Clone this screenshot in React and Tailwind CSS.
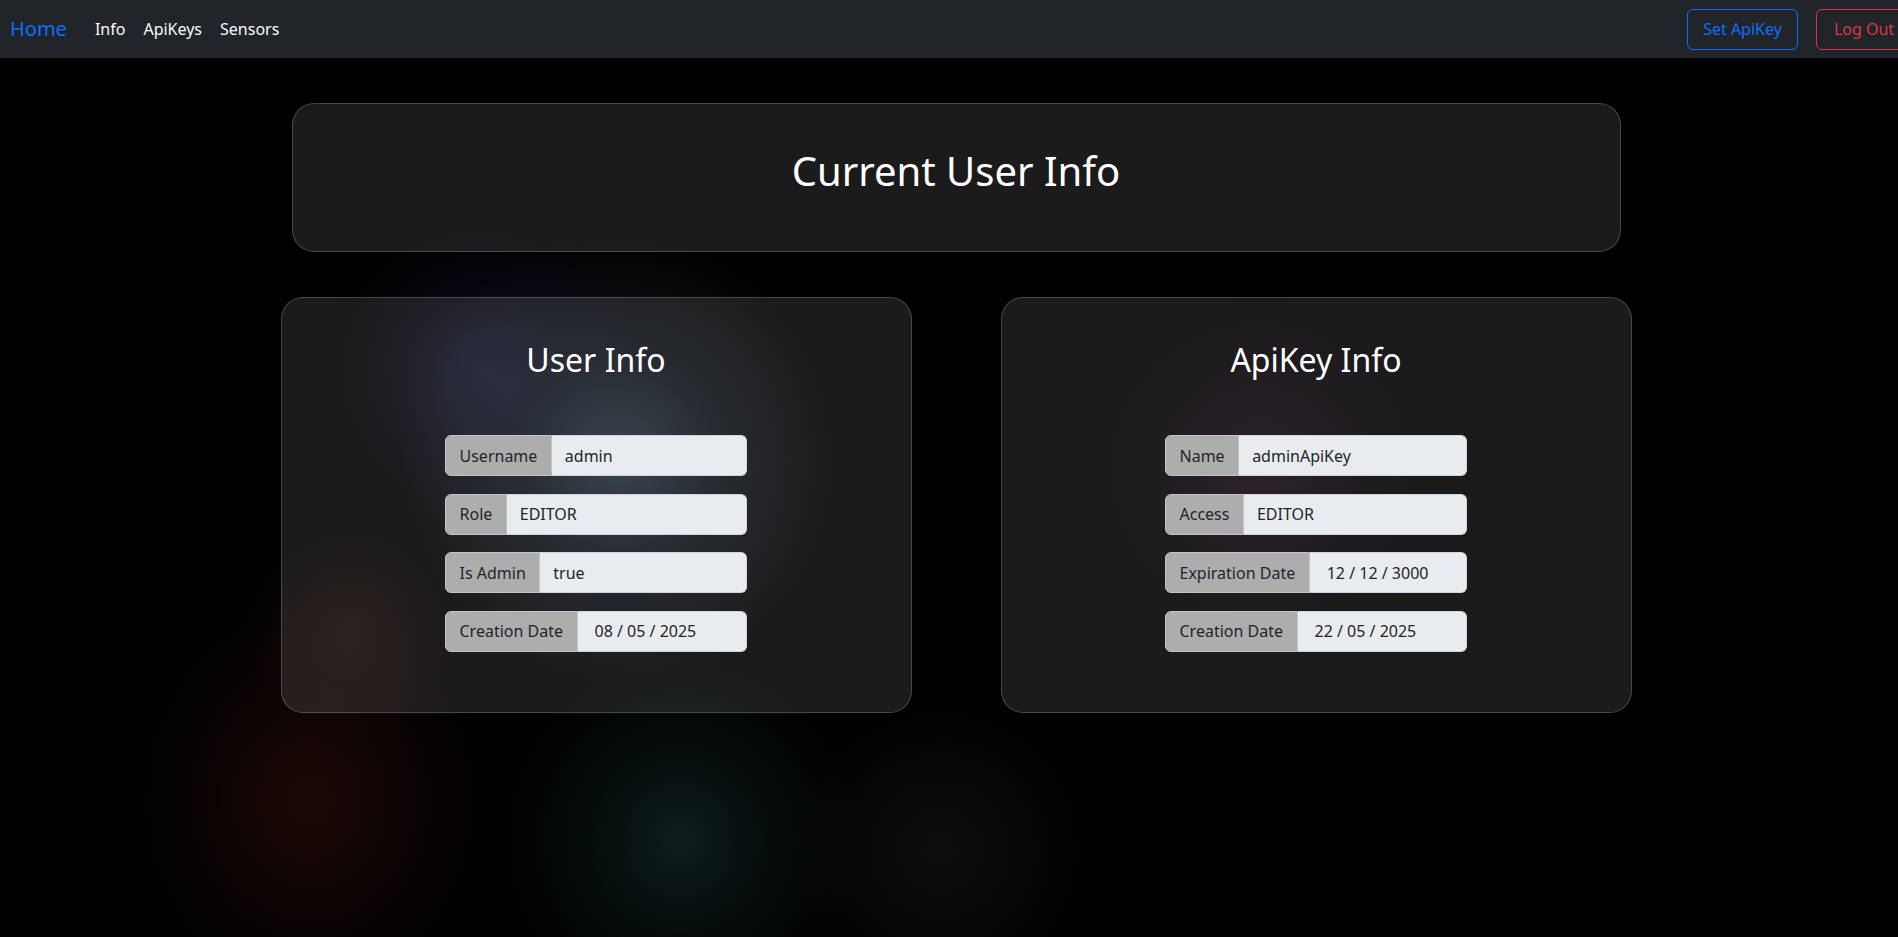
import React from 'react';

const userRows = [
  { label: 'Username', value: 'admin' },
  { label: 'Role', value: 'EDITOR' },
  { label: 'Is Admin', value: 'true' },
  { label: 'Creation Date', value: '08 / 05 / 2025', date: true },
];

const apiKeyRows = [
  { label: 'Name', value: 'adminApiKey' },
  { label: 'Access', value: 'EDITOR' },
  { label: 'Expiration Date', value: '12 / 12 / 3000', date: true },
  { label: 'Creation Date', value: '22 / 05 / 2025', date: true },
];

const InfoRow = ({ label, value, date }) => (
  <div className="flex h-[41px] w-[302px] text-[16px] text-[#212529]">
    <span className="flex items-center whitespace-nowrap rounded-l-[6px] border border-[#c2c5c8] bg-[#adadad] px-[13.5px]">
      {label}
    </span>
    <div
      className={`flex flex-1 items-center rounded-r-[6px] border border-l-0 border-[#ced4da] bg-[#e9ecef] ${
        date ? 'pl-[17px]' : 'pl-[13px]'
      }`}
    >
      {value}
    </div>
  </div>
);

const InfoCard = ({ title, rows }) => (
  <div className="flex w-[631px] flex-col items-center rounded-[22px] border border-white/20 bg-white/[0.105] pt-[43px] pb-[60px]">
    <h2 className="text-[32px] leading-[38px] text-white">{title}</h2>
    <div className="mt-[56px] flex flex-col gap-[17.5px]">
      {rows.map((row) => (
        <InfoRow key={row.label} {...row} />
      ))}
    </div>
  </div>
);

export default function App() {
  return (
    <div className="relative min-h-screen overflow-hidden bg-black font-['Noto_Sans',sans-serif]">
      {/* background glows */}
      <div className="pointer-events-none absolute inset-0">
        <div className="absolute left-[320px] top-[210px] h-[320px] w-[320px] rounded-full bg-[radial-gradient(closest-side,rgba(22,24,52,0.7)_0%,rgba(15,15,40,0.3)_55%,transparent_100%)]" />
        <div className="absolute left-[400px] top-[230px] h-[460px] w-[440px] rounded-full bg-[radial-gradient(closest-side,rgba(42,60,74,0.8)_0%,rgba(30,40,54,0.45)_45%,transparent_100%)]" />
        <div className="absolute left-[240px] top-[520px] h-[220px] w-[220px] rounded-full bg-[radial-gradient(closest-side,rgba(30,12,8,0.6)_0%,transparent_100%)]" />
        <div className="absolute left-[130px] top-[590px] h-[420px] w-[360px] rounded-full bg-[radial-gradient(closest-side,rgba(36,12,8,0.8)_0%,rgba(26,8,6,0.4)_55%,transparent_100%)]" />
        <div className="absolute left-[500px] top-[650px] h-[380px] w-[360px] rounded-full bg-[radial-gradient(closest-side,rgba(16,34,34,0.85)_0%,rgba(12,26,26,0.4)_55%,transparent_100%)]" />
        <div className="absolute left-[790px] top-[700px] h-[300px] w-[300px] rounded-full bg-[radial-gradient(closest-side,rgba(20,20,20,0.7)_0%,transparent_100%)]" />
        <div className="absolute left-[1080px] top-[290px] h-[360px] w-[360px] rounded-full bg-[radial-gradient(closest-side,rgba(36,14,36,0.55)_0%,rgba(25,10,25,0.25)_55%,transparent_100%)]" />
      </div>

      {/* navbar */}
      <nav className="relative z-10 flex h-[58px] items-center overflow-hidden bg-[#212529] pl-[10px]">
        <a href="#" className="mr-[28px] text-[20px] text-[#0d6efd]">
          Home
        </a>
        <div className="flex items-center gap-[18px] text-[16px] text-[#f8f9fa]">
          <a href="#">Info</a>
          <a href="#">ApiKeys</a>
          <a href="#">Sensors</a>
        </div>
        <div className="ml-auto -mr-[14px] flex shrink-0 items-center gap-[18px] text-[16px]">
          <button className="h-[41px] w-[111px] rounded-[6px] border border-[#0d6efd] text-[#0d6efd]">
            Set ApiKey
          </button>
          <button className="h-[41px] w-[96px] rounded-[6px] border border-[#dc3545] text-[#dc3545]">
            Log Out
          </button>
        </div>
      </nav>

      {/* content */}
      <main className="relative z-10 flex flex-col items-center pt-[45px] pl-[14px] pb-10">
        <section className="h-[149px] w-[1329px] rounded-[22px] border border-white/20 bg-white/[0.105] pt-[43px] text-center">
          <h1 className="text-[40px] leading-[48px] text-white">Current User Info</h1>
        </section>

        <div className="mt-[45px] flex gap-[89px]">
          <InfoCard title="User Info" rows={userRows} />
          <InfoCard title="ApiKey Info" rows={apiKeyRows} />
        </div>
      </main>
    </div>
  );
}
